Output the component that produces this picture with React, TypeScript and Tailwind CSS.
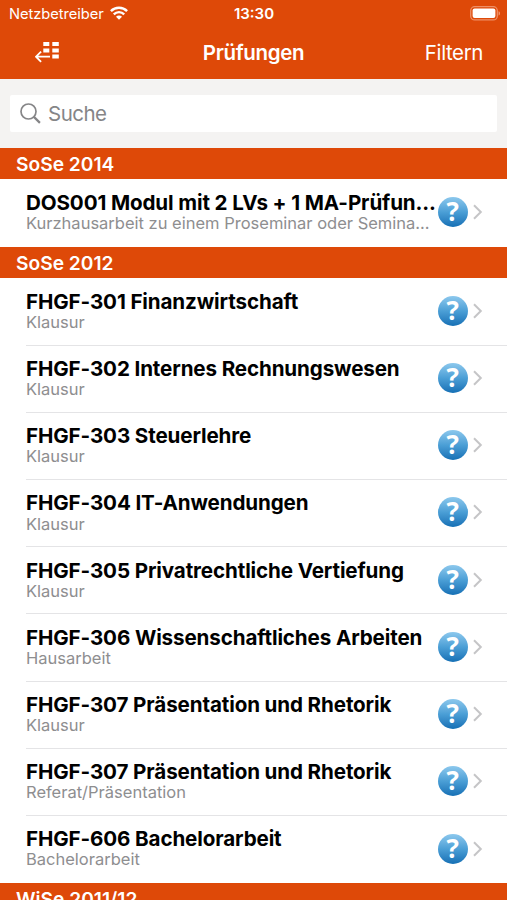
import React from 'react';

interface Exam {
  title: string;
  kind: string;
}

interface Semester {
  name: string;
  exams: Exam[];
}

const SEMESTERS: Semester[] = [
  {
    name: 'SoSe 2014',
    exams: [
      {
        title: 'DOS001 Modul mit 2 LVs + 1 MA-Prüfun...',
        kind: 'Kurzhausarbeit zu einem Proseminar oder Semina...',
      },
    ],
  },
  {
    name: 'SoSe 2012',
    exams: [
      { title: 'FHGF-301 Finanzwirtschaft', kind: 'Klausur' },
      { title: 'FHGF-302 Internes Rechnungswesen', kind: 'Klausur' },
      { title: 'FHGF-303 Steuerlehre', kind: 'Klausur' },
      { title: 'FHGF-304 IT-Anwendungen', kind: 'Klausur' },
      { title: 'FHGF-305 Privatrechtliche Vertiefung', kind: 'Klausur' },
      { title: 'FHGF-306 Wissenschaftliches Arbeiten', kind: 'Hausarbeit' },
      { title: 'FHGF-307 Präsentation und Rhetorik', kind: 'Klausur' },
      { title: 'FHGF-307 Präsentation und Rhetorik', kind: 'Referat/Präsentation' },
      { title: 'FHGF-606 Bachelorarbeit', kind: 'Bachelorarbeit' },
    ],
  },
  { name: 'WiSe 2011/12', exams: [] },
];

const WifiIcon = () => (
  <svg width="18" height="14" viewBox="0 0 18 14" fill="none" stroke="#fff" strokeWidth="2.4">
    <path d="M.9 5.1a11.4 11.4 0 0 1 16.2 0" />
    <path d="M3.8 8.3a7.3 7.3 0 0 1 10.4 0" />
    <path d="M9 13.8 6 10.7a4.2 4.2 0 0 1 6 0z" fill="#fff" stroke="none" />
  </svg>
);

const BatteryIcon = () => (
  <svg width="31" height="15" viewBox="0 0 31 15">
    <rect x="0.7" y="0.7" width="26.6" height="13.2" rx="4" fill="none" stroke="#ee8f66" strokeWidth="1.3" />
    <rect x="2.6" y="2.6" width="22.8" height="9.4" rx="2" fill="#fff" />
    <path d="M28.6 5.2c1.7.5 1.7 3.7 0 4.2z" fill="#f3a583" />
  </svg>
);

const MenuIcon = () => (
  <svg width="25" height="21" viewBox="0 0 25 21" fill="#fff">
    <path d="M8.3 0h6v4h-6zM17.3 0h6.5v4h-6.5zM8.3 6.4h6v4h-6zM17.3 6.4h6.5v4h-6.5zM17.3 12.6h6.5v3.8h-6.5z" />
    <path d="M15 14.7H1.2M6.1 9.6 1 14.7l5.1 5.1" fill="none" stroke="#fff" strokeWidth="1.8" />
  </svg>
);

const SearchIcon = () => (
  <svg width="21" height="21" viewBox="0 0 21 21" fill="none" stroke="#858587" strokeWidth="1.7">
    <circle cx="8.5" cy="8.5" r="7.5" />
    <path d="m13.9 13.9 6 6" strokeWidth="2.2" />
  </svg>
);

const HelpBadge = () => (
  <div className="flex h-[30px] w-[30px] shrink-0 justify-center rounded-full bg-linear-to-b from-[#8cc8ed] via-[#4b9fd6] to-[#1470b5]">
    <span className="font-['Open_Sans',sans-serif] text-[26px] leading-[29px] font-bold text-white">?</span>
  </div>
);

const Chevron = () => (
  <svg width="10" height="16" viewBox="0 0 10 16" fill="none" stroke="#c5c5c7" strokeWidth="2">
    <path d="m1 1.2 6.8 6.8L1 14.8" />
  </svg>
);

const ExamRow: React.FC<{ exam: Exam; last: boolean }> = ({ exam, last }) => (
  <div className="h-[67.2px] pl-[26px]">
    <div className={`flex h-full ${last ? '' : 'border-b border-[#e4e4e6]'}`}>
      <div className="w-[411.6px] shrink-0 pt-[10.3px] whitespace-nowrap">
        <div className="text-[20.6px] leading-[26px] font-[650] tracking-[-0.12px] text-black">
          <span>{exam.title}</span>
        </div>
        <div className="-mt-[0.8px] text-[16.5px] leading-[16px] text-[#8e8e90]">
          <span>{exam.kind}</span>
        </div>
      </div>
      <div className="flex items-center gap-[5px] pb-[1.5px]">
        <HelpBadge />
        <Chevron />
      </div>
    </div>
  </div>
);

const App: React.FC = () => {
  return (
    <div className="flex h-[900px] w-[507px] flex-col overflow-hidden bg-white font-['Inter',sans-serif]">
      <header className="h-[79.3px] shrink-0 bg-[#de4908] text-white">
        <div className="grid h-[27px] grid-cols-[1fr_auto_1fr] items-center pr-[6px] pl-[7px]">
          <div className="flex items-center gap-[6px] pl-[2px]">
            <span className="pt-[1px] text-[14.7px] tracking-[-0.05px]">Netzbetreiber</span>
            <WifiIcon />
          </div>
          <span className="pt-[1px] text-[15px] font-semibold">13:30</span>
          <div className="flex justify-end">
            <BatteryIcon />
          </div>
        </div>
        <div className="grid h-[51px] grid-cols-[1fr_auto_1fr] items-center px-[24px]">
          <div className="-mt-[1px] pl-[11px]">
            <MenuIcon />
          </div>
          <span className="pt-[1px] text-[20.5px] font-semibold tracking-[-0.35px]">Prüfungen</span>
          <span className="pt-[1px] text-right text-[20.5px] tracking-[-0.4px]">Filtern</span>
        </div>
      </header>

      <div className="h-[68.4px] shrink-0 bg-[#f4f3f2] px-[10px] pt-[15.5px]">
        <div className="flex h-[37px] items-center gap-[7px] rounded-[2px] bg-white pl-[10px]">
          <SearchIcon />
          <span className="pt-[2px] text-[20.5px] tracking-[-0.5px] text-[#858587]">Suche</span>
        </div>
      </div>

      {SEMESTERS.map((semester) => (
        <section key={semester.name} className="shrink-0">
          <h2 className="h-[31.8px] bg-[#de4908] pl-[16px] text-[19.2px] leading-[32px] font-semibold text-white">
            <span>{semester.name}</span>
          </h2>
          {semester.exams.map((exam, i) => (
            <ExamRow key={i} exam={exam} last={i === semester.exams.length - 1} />
          ))}
        </section>
      ))}
    </div>
  );
};

export default App;
